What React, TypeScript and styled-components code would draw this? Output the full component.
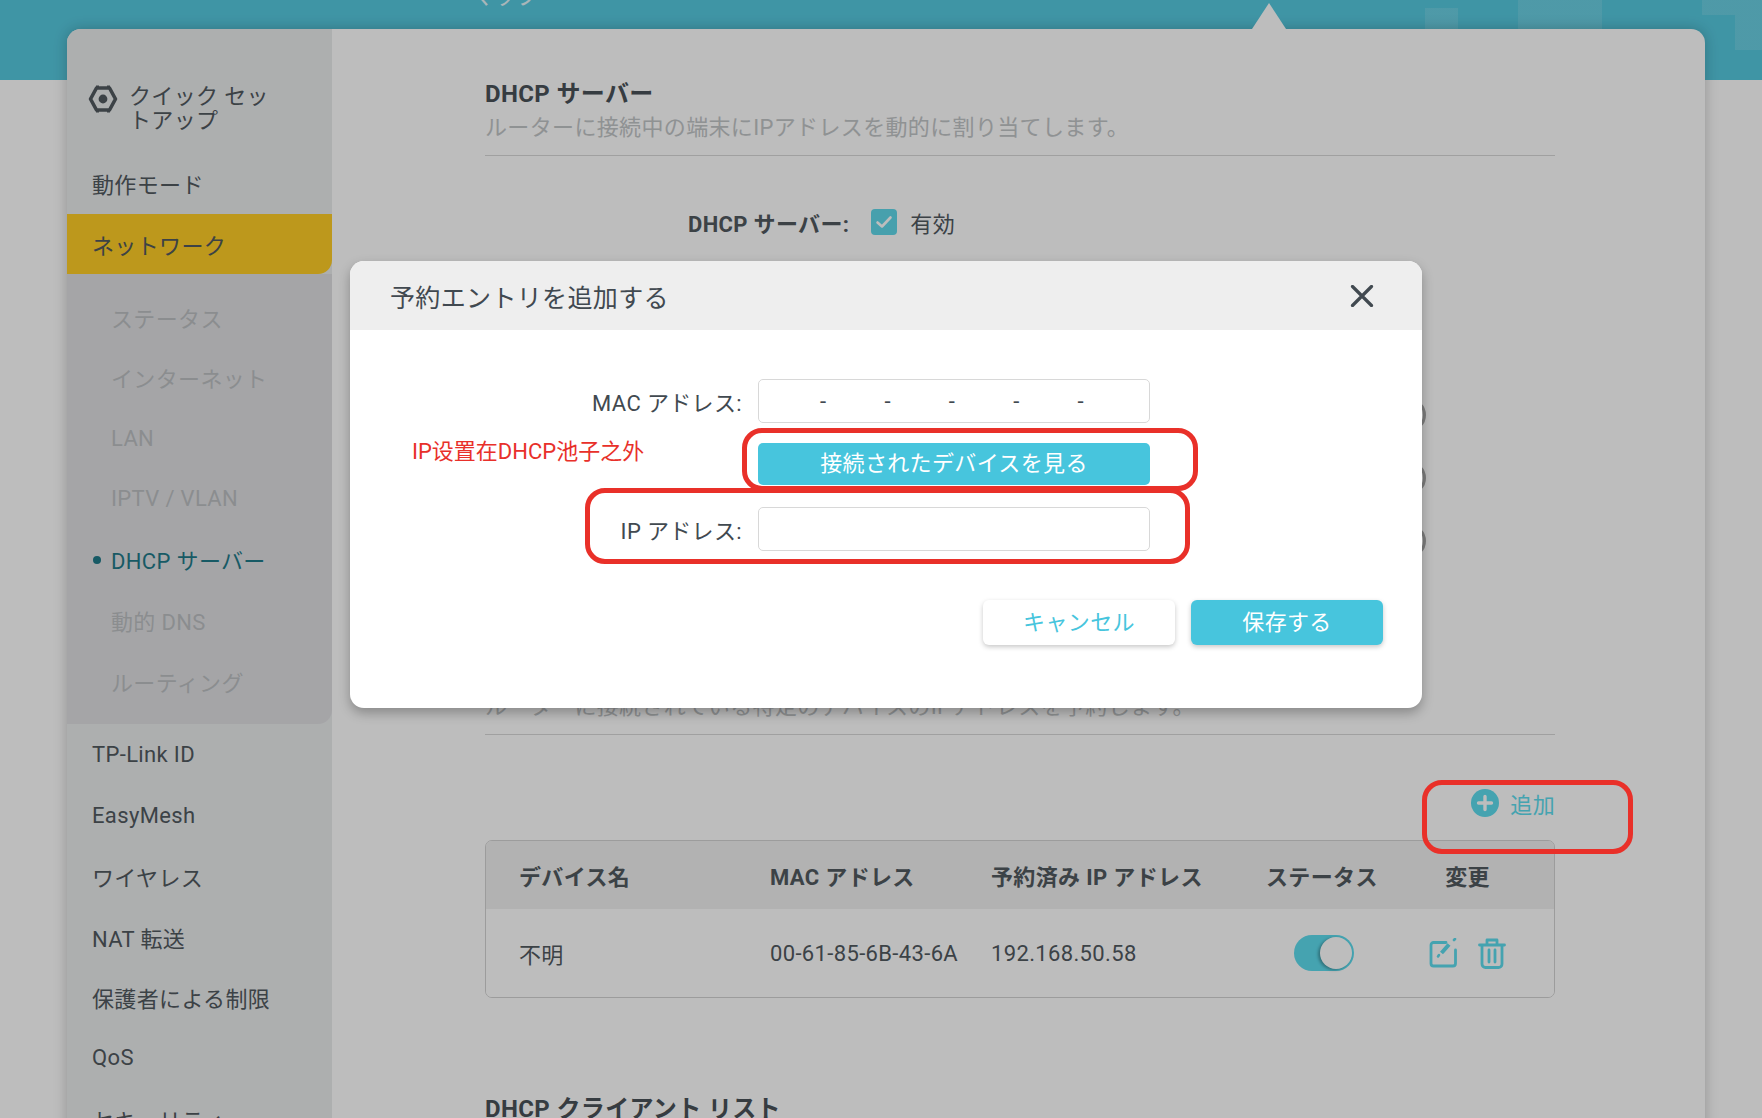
import React from "react"
import styled, { createGlobalStyle } from "styled-components"

const GlobalStyle = createGlobalStyle`
  html, body {
    margin: 0;
    padding: 0;
    background: #fff;
  }
  * {
    box-sizing: border-box;
  }
  body {
    font-family: Roboto, "Noto Sans CJK JP", sans-serif;
    font-size: 22px;
    letter-spacing: 0.35px;
    color: #51595f;
  }
`

const Page = styled.div`
  position: relative;
  width: 1762px;
  height: 1118px;
  overflow: hidden;
  background: #fff;
`

const TopBar = styled.header`
  height: 80px;
  padding-left: 472px;
  overflow: hidden;
  background-color: #56c9df;
  background-image:
    linear-gradient(rgba(255, 255, 255, 0.12), rgba(255, 255, 255, 0.12)),
    linear-gradient(rgba(255, 255, 255, 0.12), rgba(255, 255, 255, 0.12)),
    linear-gradient(rgba(255, 255, 255, 0.12), rgba(255, 255, 255, 0.12)),
    linear-gradient(rgba(255, 255, 255, 0.12), rgba(255, 255, 255, 0.12));
  background-repeat: no-repeat;
  background-size: 33px 22px, 84px 29px, 60px 15px, 27px 35px;
  background-position: 1425px 8px, 1518px 0, 1702px 0, 1735px 15px;
`

const NavLabel = styled.div`
  margin-top: -15px;
  line-height: 24px;
  letter-spacing: 0;
  color: #fff;
  opacity: 0.85;
`

const Panel = styled.div`
  position: relative;
  display: flex;
  width: 1638px;
  min-height: 1100px;
  margin: -51px 0 0 67px;
  border-radius: 14px 14px 0 0;
  background: #fff;
  box-shadow: 0 0 14px rgba(0, 0, 0, 0.22);

  &::before {
    content: "";
    position: absolute;
    left: 1185px;
    top: -26px;
    border-left: 17px solid transparent;
    border-right: 17px solid transparent;
    border-bottom: 26px solid #fff;
  }
`

const Sidebar = styled.nav`
  flex: 0 0 265px;
  padding-top: 56px;
  border-radius: 14px 0 0 0;
  background: #eaeced;
`

const QuickSetup = styled.div`
  display: flex;
  align-items: flex-start;
  gap: 11px;
  padding-left: 21px;
  margin-bottom: 20px;
  line-height: 24px;
`

const QuickSetupText = styled.span`
  width: 142px;
`

const MenuItem = styled.div<{ $active?: boolean }>`
  display: flex;
  align-items: center;
  height: 60.7px;
  padding-left: 25px;
  border-radius: ${(p) => (p.$active ? "0 0 14px 0" : "0")};
  background: ${(p) => (p.$active ? "#ffcd26" : "transparent")};
`

const SubMenu = styled.div`
  padding: 12px 0 13px;
  border-radius: 0 0 14px 0;
  background: #dfdfe2;
`

const SubItem = styled.div<{ $active?: boolean }>`
  position: relative;
  display: flex;
  align-items: center;
  height: 60.7px;
  padding-left: 44px;
  color: ${(p) => (p.$active ? "#1f7a89" : "#bcbfc2")};

  &::before {
    content: "";
    display: ${(p) => (p.$active ? "block" : "none")};
    position: absolute;
    left: 26px;
    top: 27px;
    width: 8px;
    height: 8px;
    border-radius: 50%;
    background: #1f7a89;
  }
`

const Main = styled.main`
  flex: 1;
  padding: 48px 150px 0 153px;
`

const SectionTitle = styled.h2<{ $top?: number }>`
  margin: ${(p) => p.$top ?? 0}px 0 0;
  font-size: 24px;
  font-weight: 700;
  line-height: 34px;
  color: #4a5258;
`

const SectionNote = styled.p<{ $top?: number }>`
  margin: ${(p) => p.$top ?? 0}px 0 0;
  padding-bottom: 11px;
  line-height: 32px;
  color: #c2c5c7;
  border-bottom: 1px solid #d8d8d8;
`

const ServerRow = styled.div`
  display: flex;
  align-items: center;
  height: 32px;
  margin: 50px 0 0 203px;
`

const ServerLabel = styled.span`
  font-weight: 700;
  margin-right: 22px;
`

const CheckBox = styled.span`
  display: flex;
  align-items: center;
  justify-content: center;
  width: 26px;
  height: 26px;
  margin-right: 13px;
  border-radius: 4px;
  background: #60d8ea;
`

const HintRows = styled.div`
  display: flex;
  flex-direction: column;
  gap: 29px;
  margin-top: 160px;
`

const HintRow = styled.div`
  display: flex;
  justify-content: flex-end;
  width: 941px;
`

const Hint = styled.span`
  display: block;
  width: 34px;
  height: 34px;
  border: 3px solid #a8a8a8;
  border-radius: 50%;
`

const Toolbar = styled.div`
  display: flex;
  justify-content: flex-end;
  padding: 52px 0 21px;
`

const AddButton = styled.div`
  display: flex;
  align-items: center;
  gap: 11px;
  height: 32px;
  color: #5ddcee;
`

const Table = styled.div`
  border: 1px solid #d3d3d3;
  border-radius: 7px;
  overflow: hidden;
`

const TableRow = styled.div<{ $head?: boolean }>`
  display: grid;
  grid-template-columns: 284px 221px 275px 112px 1fr;
  align-items: center;
  height: ${(p) => (p.$head ? "68px" : "88px")};
  background: ${(p) => (p.$head ? "#f0f0f0" : "#fff")};
  font-weight: ${(p) => (p.$head ? 700 : 400)};
`

const FirstCell = styled.div`
  padding-left: 33px;
`

const CenterCell = styled.div`
  display: flex;
  justify-content: center;
  padding-left: 3px;
`

const Toggle = styled.span`
  display: flex;
  justify-content: flex-end;
  align-items: center;
  width: 60px;
  height: 36px;
  padding: 2px;
  border-radius: 18px;
  background: #5ddcee;
`

const Knob = styled.span`
  width: 32px;
  height: 32px;
  border-radius: 50%;
  background: #fff;
  box-shadow: -2px 1px 3px rgba(0, 0, 0, 0.3);
`

const Actions = styled.div`
  display: flex;
  justify-content: center;
  align-items: center;
  gap: 19px;
  padding-left: 3px;
`

const Scrim = styled.div`
  position: absolute;
  inset: 0;
  background: rgba(0, 0, 0, 0.26);
`

const Modal = styled.section`
  position: absolute;
  left: 350px;
  top: 261px;
  width: 1072px;
  height: 447px;
  border-radius: 14px;
  background: #fff;
  overflow: hidden;
  box-shadow: 0 5px 12px rgba(0, 0, 0, 0.28);
`

const ModalHead = styled.div`
  display: flex;
  align-items: center;
  justify-content: space-between;
  height: 69px;
  padding: 0 48px 0 40px;
  background: #eeeeee;
`

const ModalTitle = styled.h3`
  margin: 0;
  font-size: 25px;
  font-weight: 400;
  color: #414950;
`

const ModalBody = styled.div`
  padding: 49px 39px 0 0;
`

const Field = styled.div<{ $top?: number }>`
  display: grid;
  grid-template-columns: 392px 392px;
  column-gap: 16px;
  align-items: center;
  margin-top: ${(p) => p.$top ?? 0}px;
`

const FieldLabel = styled.label`
  text-align: right;
  color: #414950;
`

const Input = styled.div`
  height: 44px;
  border: 1px solid #d8d8d8;
  border-radius: 5px;
  background: #fff;
`

const MacInput = styled(Input)`
  display: flex;
  align-items: center;
  justify-content: space-between;
  padding: 0 65px 0 61px;
  color: #414950;
`

const WideButton = styled.div`
  height: 42px;
  line-height: 42px;
  text-align: center;
  border-radius: 5px;
  color: #fff;
  background: #47c5dd;
`

const Footer = styled.div`
  display: flex;
  justify-content: flex-end;
  gap: 16px;
  margin-top: 49px;
`

const FooterButton = styled.div<{ $primary?: boolean }>`
  width: 192px;
  height: 45px;
  line-height: 45px;
  text-align: center;
  border-radius: 6px;
  color: ${(p) => (p.$primary ? "#fff" : "#47c5dd")};
  background: ${(p) => (p.$primary ? "#47c5dd" : "#fff")};
  box-shadow: 0 2px 5px rgba(0, 0, 0, 0.22);
`

const Frame = styled.div<{ $x: number; $y: number; $w: number; $h: number }>`
  position: absolute;
  left: ${(p) => p.$x}px;
  top: ${(p) => p.$y}px;
  width: ${(p) => p.$w}px;
  height: ${(p) => p.$h}px;
  border: 5px solid #e93029;
  border-radius: 20px;
`

const RedNote = styled.div`
  position: absolute;
  left: 412px;
  top: 436px;
  line-height: 32px;
  letter-spacing: 0;
  font-family: Roboto, "Noto Sans CJK SC", sans-serif;
  color: #e8302a;
`

const GearIcon = () => (
  <svg width="30" height="28" viewBox="0 0 30 28" fill="none">
    <path d="M8.5 3h13L27.5 14l-6 11h-13l-6-11z" stroke="#51595f" strokeWidth="3.6" strokeLinejoin="round" />
    <circle cx="15" cy="14" r="4.4" fill="#51595f" />
    <path d="M8 1.5h3M19 1.5h3M8 26.5h3M19 26.5h3" stroke="#51595f" strokeWidth="2" />
  </svg>
)

const CheckIcon = () => (
  <svg width="18" height="14" viewBox="0 0 18 14" fill="none">
    <path d="M2.5 7.5l4.5 4 8.5-9" stroke="#fff" strokeWidth="2.6" strokeLinecap="round" strokeLinejoin="round" />
  </svg>
)

const PlusIcon = () => (
  <svg width="28" height="28" viewBox="0 0 28 28">
    <circle cx="14" cy="14" r="14" fill="#5ddcee" />
    <path d="M14 7.5v13M7.5 14h13" stroke="#fff" strokeWidth="3.4" strokeLinecap="round" />
  </svg>
)

const CloseIcon = () => (
  <svg width="24" height="22" viewBox="0 0 24 22" fill="none">
    <path d="M2.5 1.5L21.5 20.5M21.5 1.5L2.5 20.5" stroke="#414950" strokeWidth="3.2" strokeLinecap="round" />
  </svg>
)

const EditIcon = () => (
  <svg width="30" height="30" viewBox="0 0 30 30" fill="none" stroke="#5ddcee" strokeLinecap="round">
    <path d="M17 4.5H4.5a2.5 2.5 0 0 0-2.5 2.5v18.5a2.500 2.500 0 0 0 2.500 2.500H24a2.500 2.500 0 0 0 2.500-2.500V12" strokeWidth="2.8" />
    <path d="M20 6.500L12.500 15" strokeWidth="4" strokeLinecap="butt" />
    <path d="M9 18.500l1-1.500" strokeWidth="2.600" />
    <path d="M25 2l1-1" strokeWidth="2.600" />
  </svg>
)

const TrashIcon = () => (
  <svg width="28" height="31" viewBox="0 0 28 31" fill="none" stroke="#5ddcee" strokeWidth="2.800" strokeLinecap="round">
    <path d="M1.500 7h25" />
    <path d="M9 6.500V2h10v4.500" strokeLinejoin="round" />
    <path d="M4 8v18a3.500 3.500 0 0 0 3.500 3.500h13A3.500 3.500 0 0 0 24 26V8" />
    <path d="M11 12v12M17 12v12" />
  </svg>
)

const subItems = ["ステータス", "インターネット", "LAN", "IPTV / VLAN", "DHCP サーバー", "動的 DNS", "ルーティング"]
const lowerItems = ["TP-Link ID", "EasyMesh", "ワイヤレス", "NAT 転送", "保護者による制限", "QoS", "セキュリティ"]

export default function App() {
  return (
    <Page>
      <GlobalStyle />
      <TopBar>
        <NavLabel>マップ</NavLabel>
      </TopBar>
      <Panel>
        <Sidebar>
          <QuickSetup>
            <GearIcon />
            <QuickSetupText>クイック セットアップ</QuickSetupText>
          </QuickSetup>
          <MenuItem>動作モード</MenuItem>
          <MenuItem $active>ネットワーク</MenuItem>
          <SubMenu>
            {subItems.map((item) => (
              <SubItem key={item} $active={item === "DHCP サーバー"}>
                {item}
              </SubItem>
            ))}
          </SubMenu>
          {lowerItems.map((item) => (
            <MenuItem key={item}>{item}</MenuItem>
          ))}
        </Sidebar>
        <Main>
          <SectionTitle>DHCP サーバー</SectionTitle>
          <SectionNote $top={1}>ルーターに接続中の端末にIPアドレスを動的に割り当てします。</SectionNote>
          <ServerRow>
            <ServerLabel>DHCP サーバー:</ServerLabel>
            <CheckBox>
              <CheckIcon />
            </CheckBox>
            有効
          </ServerRow>
          <HintRows>
            <HintRow>
              <Hint />
            </HintRow>
            <HintRow>
              <Hint />
            </HintRow>
            <HintRow>
              <Hint />
            </HintRow>
          </HintRows>
          <SectionNote $top={133}>ルーターに接続されている特定のデバイスのIPアドレスを予約します。</SectionNote>
          <Toolbar>
            <AddButton>
              <PlusIcon />
              追加
            </AddButton>
          </Toolbar>
          <Table>
            <TableRow $head>
              <FirstCell>デバイス名</FirstCell>
              <div>MAC アドレス</div>
              <div>予約済み IP アドレス</div>
              <div>ステータス</div>
              <CenterCell>変更</CenterCell>
            </TableRow>
            <TableRow>
              <FirstCell>不明</FirstCell>
              <div>00-61-85-6B-43-6A</div>
              <div>192.168.50.58</div>
              <CenterCell>
                <Toggle>
                  <Knob />
                </Toggle>
              </CenterCell>
              <Actions>
                <EditIcon />
                <TrashIcon />
              </Actions>
            </TableRow>
          </Table>
          <SectionTitle $top={94}>DHCP クライアント リスト</SectionTitle>
        </Main>
      </Panel>
      <Scrim />
      <Modal>
        <ModalHead>
          <ModalTitle>予約エントリを追加する</ModalTitle>
          <CloseIcon />
        </ModalHead>
        <ModalBody>
          <Field>
            <FieldLabel>MAC アドレス:</FieldLabel>
            <MacInput>
              <span>-</span>
              <span>-</span>
              <span>-</span>
              <span>-</span>
              <span>-</span>
            </MacInput>
          </Field>
          <Field $top={20}>
            <span />
            <WideButton>接続されたデバイスを見る</WideButton>
          </Field>
          <Field $top={22}>
            <FieldLabel>IP アドレス:</FieldLabel>
            <Input />
          </Field>
          <Footer>
            <FooterButton>キャンセル</FooterButton>
            <FooterButton $primary>保存する</FooterButton>
          </Footer>
        </ModalBody>
      </Modal>
      <RedNote>IP设置在DHCP池子之外</RedNote>
      <Frame $x={742} $y={428} $w={456} $h={63} />
      <Frame $x={585} $y={488} $w={605} $h={76} />
      <Frame $x={1422} $y={780} $w={211} $h={74} />
    </Page>
  )
}
